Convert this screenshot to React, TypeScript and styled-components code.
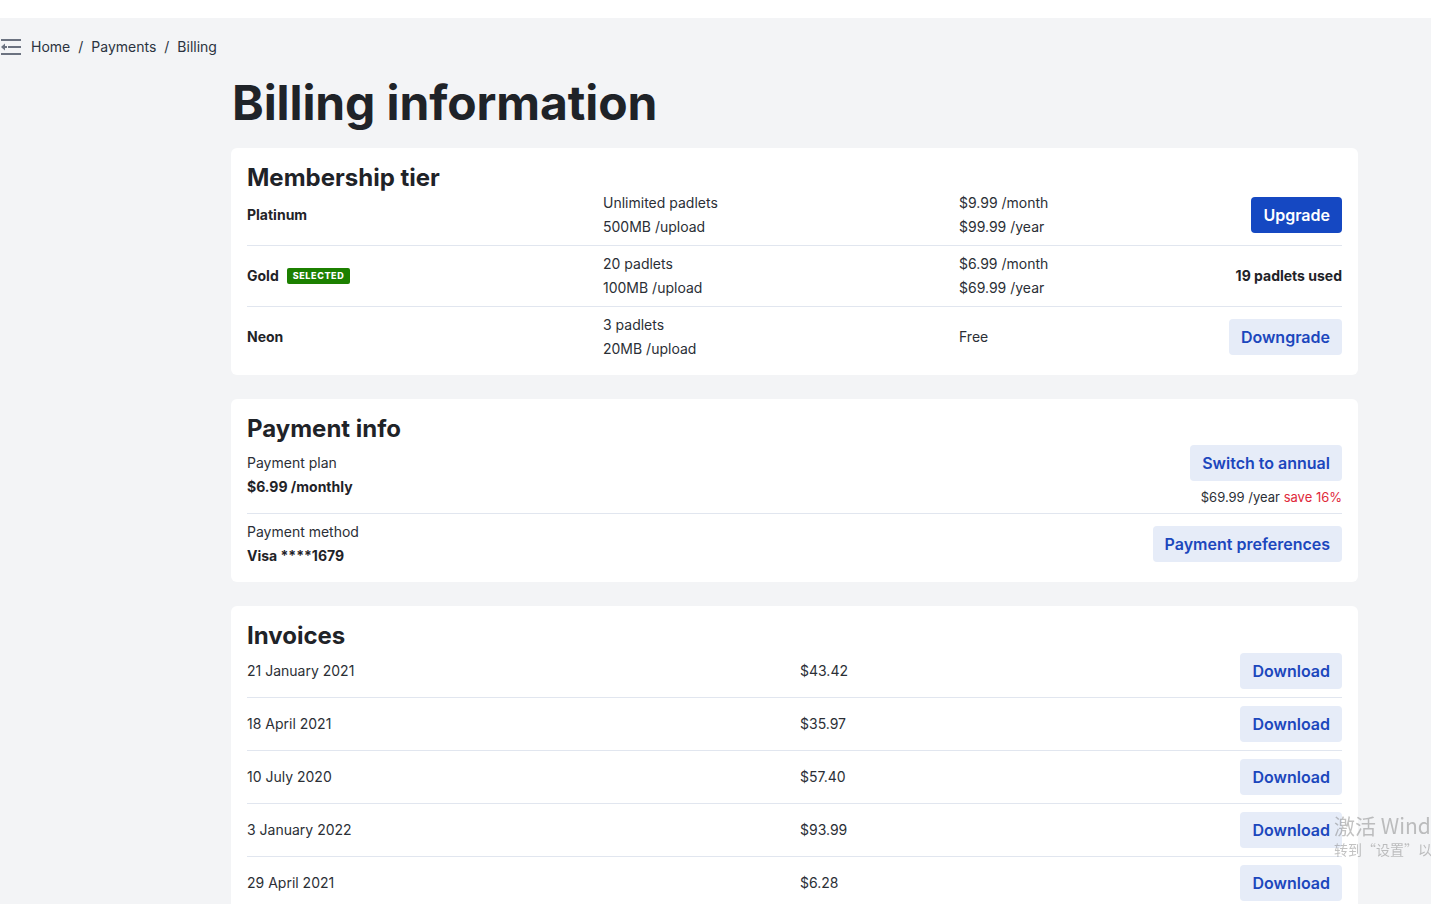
import React from "react";
import styled, { createGlobalStyle } from "styled-components";

const GlobalStyle = createGlobalStyle`
  html, body {
    margin: 0;
    padding: 0;
    overflow: hidden;
    background: #f3f4f6;
  }
  body {
    font-family: Inter, "Noto Sans", "Liberation Sans", sans-serif;
    color: #1f2328;
    font-size: 14px;
  }
  * { box-sizing: border-box; }
`;

const TopStrip = styled.div`
  height: 18px;
  background: #ffffff;
`;

const Breadcrumb = styled.nav`
  display: flex;
  align-items: center;
  gap: 10px;
  padding-top: 19px;
  height: 39px;
  font-size: 14px;
  line-height: 20px;
  color: #2f3640;
`;

const MenuButton = styled.span`
  display: inline-flex;
  width: 21px;
  height: 18px;
`;

const Crumbs = styled.span`
  display: flex;
  gap: 8px;
  color: #2b3340;
`;

const Sep = styled.span`
  color: #2b3340;
`;

const Main = styled.main`
  margin-left: 231px;
  width: 1127px;
`;

const Title = styled.h1`
  margin: 18px 0 17px 1px;
  font-size: 48px;
  line-height: 56px;
  font-weight: 700;
  color: #1f2328;
  letter-spacing: -0.1px;
`;

const Card = styled.section`
  background: #ffffff;
  border-radius: 6px;
  padding: 16px 16px 8px;
  margin-bottom: 24px;
`;

const CardTitle = styled.h2`
  margin: 0;
  font-size: 24px;
  line-height: 27px;
  font-weight: 700;
  color: #1f2328;
`;

const TierRow = styled.div<{ $first?: boolean; $last?: boolean }>`
  display: grid;
  grid-template-columns: 356px 356px 1fr auto;
  align-items: center;
  padding: ${(p) => (p.$first ? "0" : "6px")} 0 6px;
  border-bottom: ${(p) => (p.$last ? "none" : "1px solid #e1e6ef")};
`;

const Lines = styled.div`
  display: flex;
  flex-direction: column;
  line-height: 24px;
  font-size: 14px;
  color: #2b2f36;
`;

const Strong = styled.span`
  font-weight: 700;
  font-size: 14px;
  line-height: 24px;
  color: #1f2328;
`;

const NameCell = styled.div`
  display: flex;
  align-items: center;
  gap: 8px;
`;

const Badge = styled.span`
  display: inline-block;
  background: #1c8000;
  color: #ffffff;
  font-size: 9px;
  font-weight: 800;
  letter-spacing: 0.6px;
  line-height: 14px;
  padding: 1px 6px 1px;
  border-radius: 2px;
`;

const Right = styled.div`
  display: flex;
  flex-direction: column;
  align-items: flex-end;
`;

const Button = styled.button<{ $primary?: boolean }>`
  font-family: inherit;
  font-size: 16px;
  font-weight: 600;
  line-height: 20px;
  height: 36px;
  padding: 0 12px;
  border: none;
  border-radius: 4px;
  cursor: pointer;
  background: ${(p) => (p.$primary ? "#1548c2" : "#e6ecf8")};
  color: ${(p) => (p.$primary ? "#ffffff" : "#1c47bd")};
`;

const InfoRow = styled.div<{ $last?: boolean }>`
  display: flex;
  justify-content: space-between;
  align-items: center;
  padding: 3px 0 8px;
  border-bottom: ${(p) => (p.$last ? "none" : "1px solid #e1e6ef")};
  & + & {
    padding: 6px 0 6px;
  }
`;

const SubNote = styled.div`
  margin-top: 8px;
  font-size: 13px;
  line-height: 16px;
  color: #2b2f36;
`;

const Save = styled.span`
  color: #e0283a;
`;

const InvoiceRow = styled.div<{ $first?: boolean }>`
  display: grid;
  grid-template-columns: 553px 1fr auto;
  align-items: center;
  padding: ${(p) => (p.$first ? "4px" : "8px")} 0 8px;
  border-bottom: 1px solid #e1e6ef;
  font-size: 14px;
  line-height: 24px;
  color: #2b2f36;
`;

const Watermark = styled.div`
  position: fixed;
  left: 1334px;
  top: 811px;
  white-space: nowrap;
  color: rgba(120, 120, 120, 0.45);
  font-family: "Noto Sans CJK SC", "Noto Sans", sans-serif;
  pointer-events: none;
`;

const WmBig = styled.div`
  font-size: 21px;
  line-height: 28px;
`;

const WmSmall = styled.div`
  font-size: 14px;
  line-height: 20px;
`;

const MenuIcon = () => (
  <svg width="21" height="18" viewBox="0 0 21 18" fill="none">
    <rect x="1" y="1" width="20" height="2" fill="#6b7280" />
    <rect x="8" y="8" width="13" height="2" fill="#6b7280" />
    <path d="M1 9 L5 5.5 L5 12.5 Z" fill="#6b7280" />
    <rect x="3" y="8" width="4" height="2" fill="#6b7280" />
    <rect x="1" y="15" width="20" height="2" fill="#6b7280" />
  </svg>
);

const tiers = [
  {
    name: "Platinum",
    selected: false,
    features: ["Unlimited padlets", "500MB /upload"],
    prices: ["$9.99 /month", "$99.99 /year"],
    action: "upgrade",
  },
  {
    name: "Gold",
    selected: true,
    features: ["20 padlets", "100MB /upload"],
    prices: ["$6.99 /month", "$69.99 /year"],
    action: "used",
  },
  {
    name: "Neon",
    selected: false,
    features: ["3 padlets", "20MB /upload"],
    prices: ["Free"],
    action: "downgrade",
  },
];

const invoices = [
  ["21 January 2021", "$43.42"],
  ["18 April 2021", "$35.97"],
  ["10 July 2020", "$57.40"],
  ["3 January 2022", "$93.99"],
  ["29 April 2021", "$6.28"],
];

export default function App() {
  return (
    <>
      <GlobalStyle />
      <TopStrip />
      <Breadcrumb>
        <MenuButton>
          <MenuIcon />
        </MenuButton>
        <Crumbs>
          <span>Home</span>
          <Sep>/</Sep>
          <span>Payments</span>
          <Sep>/</Sep>
          <span>Billing</span>
        </Crumbs>
      </Breadcrumb>
      <Main>
        <Title>Billing information</Title>

        <Card>
          <CardTitle>Membership tier</CardTitle>
          {tiers.map((t, i) => (
            <TierRow key={t.name} $first={i === 0} $last={i === tiers.length - 1}>
              <NameCell>
                <Strong>{t.name}</Strong>
                {t.selected && <Badge>SELECTED</Badge>}
              </NameCell>
              <Lines>
                {t.features.map((f) => (
                  <span key={f}>{f}</span>
                ))}
              </Lines>
              <Lines>
                {t.prices.map((p) => (
                  <span key={p}>{p}</span>
                ))}
              </Lines>
              <Right>
                {t.action === "upgrade" && <Button $primary>Upgrade</Button>}
                {t.action === "used" && <Strong>19 padlets used</Strong>}
                {t.action === "downgrade" && <Button>Downgrade</Button>}
              </Right>
            </TierRow>
          ))}
        </Card>

        <Card>
          <CardTitle>Payment info</CardTitle>
          <InfoRow>
            <Lines>
              <span>Payment plan</span>
              <Strong>$6.99 /monthly</Strong>
            </Lines>
            <Right>
              <Button>Switch to annual</Button>
              <SubNote>
                $69.99 /year <Save>save 16%</Save>
              </SubNote>
            </Right>
          </InfoRow>
          <InfoRow $last>
            <Lines>
              <span>Payment method</span>
              <Strong>Visa ****1679</Strong>
            </Lines>
            <Right>
              <Button>Payment preferences</Button>
            </Right>
          </InfoRow>
        </Card>

        <Card>
          <CardTitle>Invoices</CardTitle>
          {invoices.map(([date, amount], i) => (
            <InvoiceRow key={date} $first={i === 0}>
              <span>{date}</span>
              <span>{amount}</span>
              <Button>Download</Button>
            </InvoiceRow>
          ))}
        </Card>
      </Main>
      <Watermark>
        <WmBig>激活 Windows</WmBig>
        <WmSmall>转到“设置”以激活 Windows。</WmSmall>
      </Watermark>
    </>
  );
}
